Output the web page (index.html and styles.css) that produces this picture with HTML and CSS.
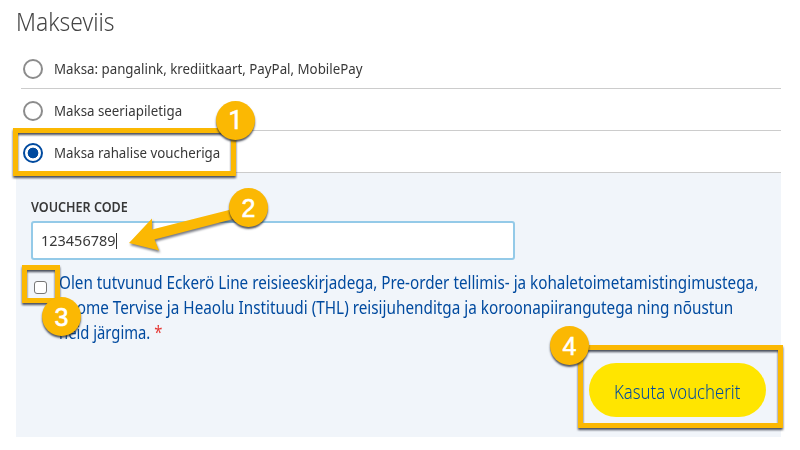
FILE: index.html
```html
<!DOCTYPE html>
<html lang="et">
<head>
    <meta charset="UTF-8">
    <meta name="viewport" content="width=device-width, initial-scale=1.0">
    <title>Makseviis</title>
    <link rel="stylesheet" href="styles.css">
</head>
<body>
    <form class="payment">
        <h1><span class="fit fit-title">Makseviis</span></h1>

        <div class="options">
            <label class="option">
                <input type="radio" name="method">
                <span class="fit fit-option">Maksa: pangalink, krediitkaart, PayPal, MobilePay</span>
            </label>
            <label class="option">
                <input type="radio" name="method">
                <span class="fit fit-option">Maksa seeriapiletiga</span>
            </label>
            <label class="option">
                <input type="radio" name="method" checked>
                <span class="fit fit-option">Maksa rahalise voucheriga</span>
            </label>
        </div>

        <div class="panel">
            <div class="code-label"><span class="fit fit-label">VOUCHER CODE</span></div>
            <div class="code-input"><span class="fit fit-code">123456789</span><span class="caret"></span></div>
            <div class="terms">
                <input type="checkbox">
                <div class="terms-text">
                    <div><span class="fit fit-line1">Olen tutvunud Eckerö Line reisieeskirjadega, Pre-order tellimis- ja kohaletoimetamistingimustega,</span></div>
                    <div><span class="fit fit-line2">Soome Tervise ja Heaolu Instituudi (THL) reisijuhenditga ja koroonapiirangutega ning nõustun</span></div>
                    <div><span class="fit fit-line3">neid järgima. <span class="required">*</span></span></div>
                </div>
            </div>
            <button type="button"><span class="fit fit-button">Kasuta voucherit</span></button>
        </div>
    </form>

    <!-- Guide marks over the form -->
    <div class="frame frame-1"></div>
    <div class="frame frame-3"></div>
    <div class="frame frame-4"></div>
    <svg class="arrow" width="120" height="50" viewBox="0 0 120 50">
        <path d="M4 33 L27 8.5 L27 19.5 L112 -2 L114 7.5 L29.5 29.5 L34 40.5 Z"/>
    </svg>
    <div class="step step-1">1</div>
    <div class="step step-2">2</div>
    <div class="step step-3">3</div>
    <div class="step step-4">4</div>
</body>
</html>
```
FILE: styles.css
```css
body {
    margin: 0;
    width: 800px;
    height: 450px;
    overflow: hidden;
    position: relative;
    background-color: #fff;
    color: #383838;
    font-family: "Noto Sans", "Open Sans", sans-serif;
}

.payment {
    padding: 0 19px 0 16px;
}

h1 {
    margin: 0;
    height: 47px;
    line-height: 43px;
    font-size: 26px;
    font-weight: 300;
    color: #444;
}

.fit {
    display: inline-block;
    white-space: nowrap;
    transform-origin: left center;
}

.fit-title {
    transform: scaleX(0.88);
}

.fit-option {
    margin-top: -1px;
    transform: scaleX(0.887);
}

.fit-label {
    transform: scaleX(0.897);
}

.fit-code {
    width: 75px;
    margin-top: -1px;
    transform: scaleX(0.965);
}

.fit-line1 {
    margin-right: -110px;
    transform: scaleX(0.871);
}

.fit-line2 {
    margin-right: -110px;
    transform: scaleX(0.874);
}

.fit-line3 {
    transform: scaleX(0.845);
}

.fit-button {
    transform: scaleX(0.834);
}

.options {
    padding-left: 5px;
}

.option {
    display: flex;
    align-items: center;
    gap: 11px;
    box-sizing: border-box;
    height: 42px;
    padding: 2px 0 0 2px;
    border-bottom: 1px solid #ccc;
    font-size: 15px;
}

.option input {
    appearance: none;
    box-sizing: border-box;
    width: 20px;
    height: 20px;
    margin: 0;
    border: 2px solid #8c8c8c;
    border-radius: 50%;
    background-color: #fff;
}

.option input:checked {
    border-color: #004a9f;
    background: radial-gradient(circle, #004a9f 5px, #fff 5.7px);
}

.panel {
    display: flex;
    flex-direction: column;
    box-sizing: border-box;
    height: 264px;
    padding: 24px 15px 20px;
    background-color: #f1f5fa;
}

.code-label {
    height: 24px;
    line-height: 19px;
    font-size: 14px;
    font-weight: 600;
}

.code-input {
    display: flex;
    align-items: center;
    box-sizing: border-box;
    width: 484px;
    height: 39px;
    padding-left: 8px;
    border: 2px solid #94cae8;
    border-radius: 3px;
    background-color: #fff;
    font-size: 15px;
}

.caret {
    width: 1px;
    height: 16px;
    background-color: #333;
}

.terms {
    display: flex;
    align-items: flex-start;
    gap: 12px;
    margin-top: 10px;
    padding-left: 3px;
}

.terms input {
    appearance: none;
    box-sizing: border-box;
    flex-shrink: 0;
    width: 13px;
    height: 13px;
    margin: 11px 0 0;
    border: 1px solid #767676;
    border-radius: 3px;
    background-color: #fff;
}

.terms-text {
    min-width: 0;
    line-height: 25px;
    font-size: 17.5px;
    color: #004a9f;
}

.required {
    color: #e53935;
}

button {
    align-self: flex-end;
    width: 177px;
    height: 54px;
    margin-top: auto;
    padding: 2px 0 0 25px;
    border: none;
    border-radius: 27px;
    background-color: #ffe500;
    color: #004a9f;
    font-family: inherit;
    font-size: 20px;
    font-weight: 300;
    text-align: left;
}

.frame {
    position: absolute;
    box-sizing: border-box;
    border: 5px solid #fbb803;
    filter: drop-shadow(0 2px 1px rgba(30, 35, 50, 0.8));
}

.frame-1 {
    left: 13px;
    top: 128px;
    width: 223px;
    height: 48px;
}

.frame-3 {
    left: 22px;
    top: 265px;
    width: 38px;
    height: 38px;
}

.frame-4 {
    left: 578px;
    top: 345px;
    width: 205px;
    height: 83px;
}

.arrow {
    position: absolute;
    left: 125px;
    top: 210px;
    overflow: visible;
    fill: #fbb803;
    filter: drop-shadow(1px 2px 1px rgba(30, 35, 50, 0.6));
}

.step {
    position: absolute;
    width: 39px;
    height: 39px;
    border-radius: 50%;
    background-color: #fbb803;
    box-shadow: 0 2px 2px rgba(30, 35, 50, 0.75);
    color: #fff;
    font-family: "Liberation Sans", sans-serif;
    font-size: 25px;
    line-height: 40px;
    text-align: center;
    -webkit-text-stroke: 0.6px #fff;
}

.step-1 {
    left: 216px;
    top: 101px;
    font-family: Roboto, sans-serif;
}

.step-2 {
    left: 229px;
    top: 188px;
}

.step-3 {
    left: 42px;
    top: 297px;
}

.step-4 {
    left: 550px;
    top: 326px;
}
```
